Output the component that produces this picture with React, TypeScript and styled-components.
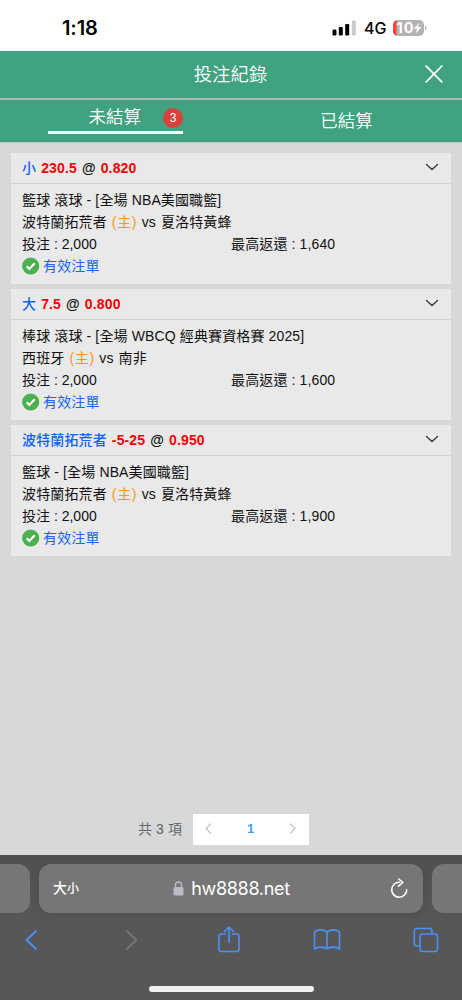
import React from "react";
import styled, { createGlobalStyle } from "styled-components";

const GlobalStyle = createGlobalStyle`
  * { box-sizing: border-box; }
  body { margin: 0; background: #d8d8d8; }
`;

const sans = `"Liberation Sans", "Noto Sans CJK TC", sans-serif`;
const system = `Inter, "Noto Sans CJK TC", sans-serif`;

const Screen = styled.div`
  width: 462px;
  height: 1000px;
  display: flex;
  flex-direction: column;
  overflow: hidden;
  background: #d8d8d8;
  font-family: ${sans};
  color: #111;
  white-space: nowrap;
`;

const StatusBar = styled.header`
  height: 51px;
  flex: none;
  display: flex;
  align-items: center;
  justify-content: space-between;
  padding: 4px 35px 0 62px;
  background: #fff;
  color: #000;
  font-family: ${system};
`;

const Clock = styled.span`
  font-size: 20px;
  font-weight: 600;
  letter-spacing: -0.1px;
`;

const StatusIcons = styled.div`
  display: flex;
  align-items: center;
`;

const Network = styled.span`
  font-size: 16px;
  font-weight: 500;
  margin: 0 7px 0 8px;
  width: 22px;
`;

const TitleBar = styled.div`
  height: 49px;
  flex: none;
  display: grid;
  grid-template-columns: 56px 1fr 56px;
  align-items: center;
  justify-items: center;
  background: #41a281;
  border-bottom: 2px solid #a9bdb5;
  color: #fff;
  font-size: 18.4px;
  font-weight: 350;
`;

const TitleText = styled.h1`
  grid-column: 2;
  margin: 0;
  padding-right: 1px;
  font: inherit;
  line-height: 46px;
`;

const Tabs = styled.nav`
  height: 43px;
  flex: none;
  display: grid;
  grid-template-columns: 1fr 1fr;
  background: #41a281;
  border-bottom: 1px solid #b9c6c1;
  color: #fff;
  font-size: 17.5px;
  font-weight: 350;
`;

const Tab = styled.div<{ $active?: boolean }>`
  display: flex;
  justify-content: ${(p) => (p.$active ? "flex-end" : "center")};
  align-items: center;
  width: ${(p) => (p.$active ? "135px" : "auto")};
  height: ${(p) => (p.$active ? "34px" : "38px")};
  margin-left: ${(p) => (p.$active ? "48px" : "0")};
  border-bottom: ${(p) => (p.$active ? "3px solid #fff" : "none")};
`;

const Count = styled.span`
  width: 20px;
  height: 20px;
  margin: 4px 0 0 22px;
  border-radius: 50%;
  background: #d9413c;
  font-size: 12px;
  font-weight: 400;
  line-height: 20px;
  text-align: center;
`;

const List = styled.main`
  flex: 1;
  display: flex;
  flex-direction: column;
  gap: 5px;
  padding: 10px 11px 0 11px;
`;

const Card = styled.article`
  width: 440px;
  height: 131px;
  flex: none;
  background: #e9e9e9;
  font-size: 14px;
`;

const CardHead = styled.div`
  height: 31px;
  display: flex;
  align-items: center;
  justify-content: space-between;
  padding: 0 12px 2px 11px;
  border-bottom: 1px solid #d2d2d2;
  font-weight: 700;
`;

const Odds = styled.div`
  display: flex;
  gap: 5px;
  padding-top: 2px;
  line-height: 28px;
  letter-spacing: 0.14px;
`;

const Pick = styled.span`
  color: #0f62fe;
  font-weight: 500;
`;

const Red = styled.span`
  color: #fb0007;
`;

const CardBody = styled.div`
  padding: 5px 11px 0;
`;

const Line = styled.div`
  display: flex;
  height: 21.75px;
  line-height: 22px;
  letter-spacing: 0.13px;
`;

const Home = styled.span`
  color: #ff9416;
  margin: 0 4.5px 0 5px;
  letter-spacing: 0.7px;
`;

const Versus = styled.span`
  margin-right: 5px;
`;

const Stake = styled.span`
  width: 209px;
  letter-spacing: 0;
`;

const Valid = styled.div`
  display: flex;
  align-items: center;
  gap: 3px;
  height: 22px;
  margin-top: 1.2px;
  color: #1565fb;
  line-height: 22px;
  letter-spacing: 0.15px;
`;

const Pagination = styled.div`
  display: flex;
  align-items: center;
  height: 31px;
  flex: none;
  margin: 0 0 10px 138px;
  font-size: 14px;
  color: #606266;
  font-weight: 350;
`;

const Total = styled.span`
  width: 55px;
  height: 31px;
  line-height: 30px;
  letter-spacing: 0.1px;
`;

const Pager = styled.div`
  width: 116px;
  height: 31px;
  display: flex;
  align-items: center;
  justify-content: space-between;
  padding: 0 13px 2px 12px;
  background: #fff;
`;

const PageNumber = styled.span`
  color: #409eff;
  font-size: 13px;
  font-weight: 700;
`;

const Browser = styled.footer`
  height: 145px;
  flex: none;
  display: flex;
  flex-direction: column;
  background: linear-gradient(#505050, #575757 65px);
`;

const AddressRow = styled.div`
  display: flex;
  gap: 9px;
  padding-top: 9px;
`;

const SideTab = styled.div<{ $left?: boolean }>`
  width: 30px;
  height: 49px;
  flex: none;
  background: #767676;
  border-radius: ${(p) => (p.$left ? "0 12px 12px 0" : "12px 0 0 12px")};
`;

const Address = styled.div`
  width: 384px;
  height: 49px;
  flex: none;
  display: grid;
  grid-template-columns: 28px 1fr 18px;
  align-items: center;
  padding: 0 15px 0 14px;
  border-radius: 12px;
  background: #767676;
  box-shadow: 0 2px 10px rgba(0, 0, 0, 0.1);
  color: #fff;
  font-family: ${system};
`;

const TextSize = styled.span`
  font-size: 14px;
  font-weight: 500;
  line-height: 20px;
  small { font-size: 12px; }
`;

const Host = styled.span`
  display: flex;
  align-items: center;
  justify-content: center;
  gap: 7px;
  padding-right: 8px;
  font-size: 18px;
  letter-spacing: -0.3px;
`;

const Toolbar = styled.div`
  height: 62px;
  display: flex;
  align-items: center;
  justify-content: space-between;
  padding: 0 22px 10px 17px;
  margin-top: 1px;
`;

const Tool = styled.span<{ $shift?: number }>`
  width: 28px;
  display: flex;
  justify-content: center;
  padding-left: ${(p) => p.$shift ?? 0}px;
`;

const HomeIndicator = styled.div`
  width: 165px;
  height: 6px;
  margin: 10px 0 0 149px;
  flex: none;
  border-radius: 3px;
  background: #f1f1f1;
`;

type Bet = {
  pick: string;
  line: string;
  odds: string;
  league: string;
  home: string;
  away: string;
  payout: string;
};

const bets: Bet[] = [
  { pick: "小", line: "230.5", odds: "0.820", league: "籃球 滾球 - [全場 NBA美國職籃]", home: "波特蘭拓荒者", away: "夏洛特黃蜂", payout: "1,640" },
  { pick: "大", line: "7.5", odds: "0.800", league: "棒球 滾球 - [全場 WBCQ 經典賽資格賽 2025]", home: "西班牙", away: "南非", payout: "1,600" },
  { pick: "波特蘭拓荒者", line: "-5-25", odds: "0.950", league: "籃球 - [全場 NBA美國職籃]", home: "波特蘭拓荒者", away: "夏洛特黃蜂", payout: "1,900" },
];

const Signal = () => (
  <svg width="24" height="16" viewBox="0 0 24 16">
    <rect x="0.5" y="9.5" width="4" height="6" rx="1.2" />
    <rect x="6.8" y="7" width="4" height="8.5" rx="1.2" />
    <rect x="13.2" y="4" width="4" height="11.5" rx="1.2" />
    <rect x="19.8" y="0.5" width="4" height="15" rx="1.2" fill="#ccc" />
  </svg>
);

const Battery = () => (
  <svg width="34" height="16" viewBox="0 0 34 16">
    <defs>
      <clipPath id="cell"><rect width="31" height="16" rx="4.8" /></clipPath>
    </defs>
    <g clipPath="url(#cell)">
      <rect width="31" height="16" fill="#b3b3b3" />
      <rect width="3.5" height="16" fill="#fa4336" />
    </g>
    <path d="M32 5.5c2 .7 2 4.3 0 5z" fill="#b3b3b3" />
    <text x="3.6" y="13.3" fill="#fff" fontFamily="Inter" fontSize="14.5" fontWeight="700" textLength="17">10</text>
    <path d="M26.3 2.8l-5.6 6h3.4l-1.4 4.7 5.8-6.4h-3.5z" fill="#fff" />
  </svg>
);

const CheckBadge = () => (
  <svg width="18" height="18" viewBox="0 0 18 18">
    <circle cx="8.7" cy="9" r="8.6" fill="#4caf50" />
    <path d="M4.7 9.3l2.6 2.6L12.7 6.3" fill="none" stroke="#fff" strokeWidth="2.2" />
  </svg>
);

const Stroke = ({ d, w, h, color, sw = 1.8 }: { d: string; w: number; h: number; color: string; sw?: number }) => (
  <svg width={w} height={h} viewBox={`0 0 ${w} ${h}`} fill="none" stroke={color} strokeWidth={sw} strokeLinecap="round" strokeLinejoin="round">
    <path d={d} />
  </svg>
);

const blue = "#4a90f7";

export default function App() {
  return (
    <Screen>
      <GlobalStyle />
      <StatusBar>
        <Clock>1:18</Clock>
        <StatusIcons>
          <Signal />
          <Network>4G</Network>
          <Battery />
        </StatusIcons>
      </StatusBar>
      <TitleBar>
        <TitleText>投注紀錄</TitleText>
        <Stroke w={18} h={20} color="#fff" sw={1.7} d="M1.2 1.2L16.8 16.8M16.8 1.2L1.2 16.8" />
      </TitleBar>
      <Tabs>
        <Tab $active>未結算<Count>3</Count></Tab>
        <Tab>已結算</Tab>
      </Tabs>
      <List>
        {bets.map((b) => (
          <Card key={b.pick}>
            <CardHead>
              <Odds>
                <Pick>{b.pick}</Pick>
                <Red>{b.line}</Red>
                <span>@</span>
                <Red>{b.odds}</Red>
              </Odds>
              <Stroke w={14} h={8} color="#333" sw={1.3} d="M1.5 1.5L7 6.5L12.5 1.5" />
            </CardHead>
            <CardBody>
              <Line>{b.league}</Line>
              <Line>{b.home}<Home>(主)</Home><Versus>vs</Versus>{b.away}</Line>
              <Line><Stake>投注 : 2,000</Stake><span>最高返還 : {b.payout}</span></Line>
              <Valid><CheckBadge />有效注單</Valid>
            </CardBody>
          </Card>
        ))}
      </List>
      <Pagination>
        <Total>共 3 項</Total>
        <Pager>
          <Stroke w={7} h={11} color="#c0c4cc" sw={1.3} d="M5.5 1L1 5.5L5.5 10" />
          <PageNumber>1</PageNumber>
          <Stroke w={7} h={11} color="#c0c4cc" sw={1.3} d="M1.5 1L6 5.5L1.5 10" />
        </Pager>
      </Pagination>
      <Browser>
        <AddressRow>
          <SideTab $left />
          <Address>
            <TextSize>大<small>小</small></TextSize>
            <Host>
              <svg width="11" height="15" viewBox="0 0 11 15">
                <rect x="0.5" y="6" width="10" height="8.5" rx="1.5" fill="#bcbbc4" />
                <path d="M2.5 7V4a3 3 0 0 1 6 0v3" fill="none" stroke="#bcbbc4" strokeWidth="1.3" />
              </svg>
              hw8888.net
            </Host>
            <Stroke w={18} h={22} color="#fff" sw={1.6} d="M9.5 4.2A7.5 7.5 0 1 0 16.7 11.7M8.8 1L12.8 4.5L8.5 8.2" />
          </Address>
          <SideTab />
        </AddressRow>
        <Toolbar>
          <Tool><Stroke w={14} h={22} color={blue} d="M12 2L2.5 11L12 20" /></Tool>
          <Tool $shift={5}><Stroke w={14} h={22} color="#757575" d="M2 2L11.5 11L2 20" /></Tool>
          <Tool $shift={1}><Stroke w={24} h={28} color={blue} sw={1.6} d="M8.5 8H4.5A2.5 2.5 0 0 0 2 10.5V23A2.5 2.5 0 0 0 4.5 25.5H19.5A2.5 2.5 0 0 0 22 23V10.5A2.5 2.5 0 0 0 19.5 8H15.5M12 16.5V1M7.5 5.5L12 1L16.5 5.5" /></Tool>
          <Tool><Stroke w={28} h={24} color={blue} sw={1.6} d="M14 4.3C11.5 1 4 1 1.5 4.3V21C4 18.5 11.5 18.5 14 21C16.5 18.5 24 18.5 26.5 21V4.3C24 1 16.5 1 14 4.3V21" /></Tool>
          <Tool><Stroke w={26} h={26} color={blue} sw={1.6} d="M7 19H3.8A2.5 2.5 0 0 1 1.3 16.5V4A2.5 2.5 0 0 1 3.8 1.5H16.5A2.5 2.5 0 0 1 19 4V7M9.5 7H22A2.5 2.5 0 0 1 24.5 9.5V22A2.5 2.5 0 0 1 22 24.5H9.5A2.5 2.5 0 0 1 7 22V9.5A2.5 2.5 0 0 1 9.5 7Z" /></Tool>
        </Toolbar>
        <HomeIndicator />
      </Browser>
    </Screen>
  );
}
